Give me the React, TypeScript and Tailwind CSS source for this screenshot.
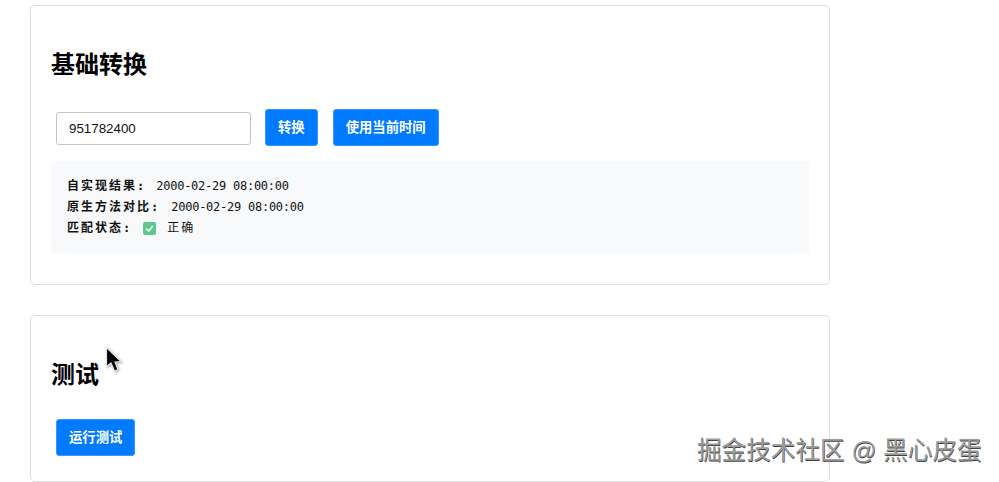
const cjk = "font-['Liberation_Sans','Noto_Sans_CJK_SC',sans-serif]"

function Btn({ children }: { children: string }) {
  return (
    <button className="m-[5px] h-[37px] px-3 rounded-[3px] bg-[#007bff] text-white text-[13.333px] font-bold border border-[#3b97f5]">
      {children}
    </button>
  )
}

function Cursor() {
  return (
    <svg className="absolute left-[103px] top-[345px] drop-shadow-[1px_1px_1px_rgba(0,0,0,0.35)]" width="22" height="30" viewBox="0 0 22 30">
      <path d="M3.5 2.5 L3.5 21.5 L8 18 L11.5 26 L15 24.5 L12 17 L18 16.5 Z" fill="#000" stroke="#e8e8e8" strokeWidth="1.2" strokeLinejoin="round" />
    </svg>
  )
}

export default function App() {
  return (
    <div className={`relative h-[482px] w-[999px] overflow-hidden bg-white pl-[30px] pt-[5px] text-black ${cjk}`}>
      {/* 基础转换 */}
      <section className="w-[800px] h-[280px] mb-[30px] rounded-[5px] border border-[#dddddd] px-5 pt-[41px]">
        <h2 className="text-[24px] leading-[36px] font-bold">基础转换</h2>
        <div className="flex items-start mt-[21px]">
          <input
            readOnly
            value="951782400"
            className={`ml-[5px] mr-[9px] mt-[8px] h-[33px] w-[195px] rounded-[3px] border border-[#c4c4c4] px-3 text-[13.333px] text-[#111] outline-none ${cjk}`}
          />
          <Btn>转换</Btn>
          <span className="w-[5px]" />
          <Btn>使用当前时间</Btn>
        </div>
        <div className="mt-[10px] h-[93px] rounded-[3px] bg-[#f8f9fa] px-4 pt-[15px] font-['DejaVu_Sans_Mono','Noto_Sans_CJK_SC',monospace] text-[12px] leading-[21px] tracking-[-0.25px] text-[#111]">
          <div className="flex">
            <b className="tracking-[2px] mr-[10px]">自实现结果:</b>
            <span>2000-02-29 08:00:00</span>
          </div>
          <div className="flex">
            <b className="tracking-[2px] mr-[11px]">原生方法对比:</b>
            <span>2000-02-29 08:00:00</span>
          </div>
          <div className="flex items-center">
            <b className="tracking-[2px] mr-[11px]">匹配状态:</b>
            <span className="mr-[11px] flex h-[13px] w-[13px] items-center justify-center rounded-[2px] bg-[#5ac98a]">
              <svg width="9" height="9" viewBox="0 0 9 9">
                <path d="M1.2 4.6 L3.6 7 L7.8 2" fill="none" stroke="#fff" strokeWidth="1.6" />
              </svg>
            </span>
            <span className="tracking-[2px]">正确</span>
          </div>
        </div>
      </section>

      {/* 测试 */}
      <section className="w-[800px] h-[167px] rounded-[5px] border border-[#dddddd] px-5 pt-[41px]">
        <h2 className="text-[24px] leading-[36px] font-bold">测试</h2>
        <div className="mt-[21px] flex">
          <Btn>运行测试</Btn>
        </div>
      </section>

      <Cursor />

      {/* watermark */}
      <div className="absolute left-[697px] top-[435px] text-[24.6px] leading-[32px] whitespace-nowrap text-[#9c9c9c] [text-shadow:0.5px_0.5px_0.5px_#444]">
        掘金技术社区 @ 黑心皮蛋
      </div>
    </div>
  )
}
